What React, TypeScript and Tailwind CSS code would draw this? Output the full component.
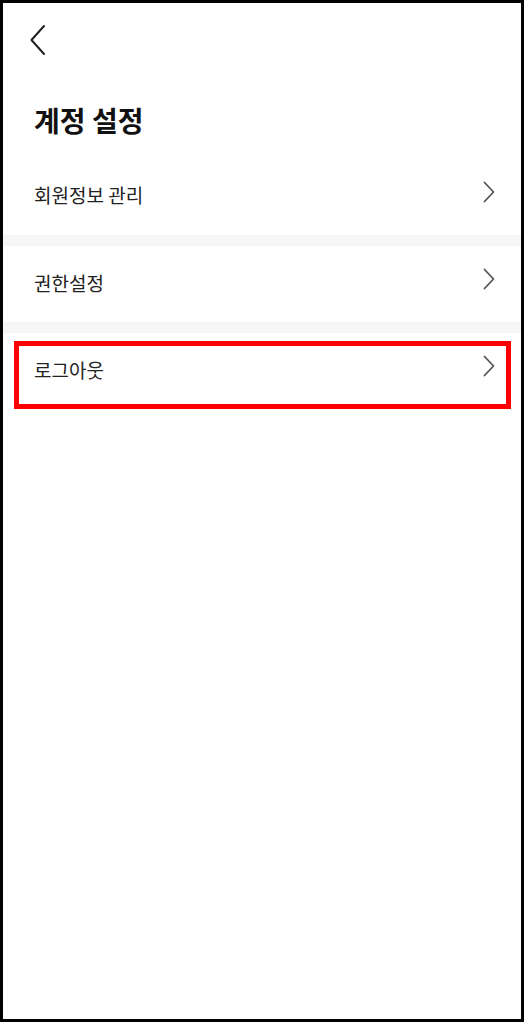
import React from "react";

const items = ["회원정보 관리", "권한설정", "로그아웃"];

function ChevronRight() {
  return (
    <svg width="12" height="22" viewBox="0 0 12 22" fill="none" className="shrink-0 mb-[10px]">
      <path
        d="M1.5 1.5 L10.5 11 L1.5 20.5"
        stroke="#555555"
        strokeWidth="1.8"
        strokeLinecap="round"
        strokeLinejoin="round"
      />
    </svg>
  );
}

export default function App() {
  return (
    <div
      className="relative w-[524px] h-[1022px] border-[3px] border-black bg-white text-[#222222] overflow-hidden"
      style={{ fontFamily: '"Noto Sans CJK KR", "Noto Sans", sans-serif' }}
    >
      {/* header — back button */}
      <div className="h-[74px] pl-[26px] pt-[21px]">
        <svg width="17" height="32" viewBox="0 0 17 32" fill="none">
          <path
            d="M15 2 L2.5 16 L15 30"
            stroke="#222222"
            strokeWidth="2"
            strokeLinecap="round"
            strokeLinejoin="round"
          />
        </svg>
      </div>

      {/* title */}
      <div className="h-[81px] pt-[5px] pl-[31px] flex items-center">
        <h1 className="text-[28px] font-bold text-[#111111] leading-none">계정 설정</h1>
      </div>

      {/* menu list */}
      <div className="flex flex-col">
        {items.map((label, i) => (
          <div key={label}>
            <div
              className={`flex items-center justify-between pl-[31px] pr-[26px] ${
                i === 0 ? "h-[77px]" : "h-[76px]"
              }`}
            >
              <span className="text-[19px] leading-none mb-[4px]">{label}</span>
              <ChevronRight />
            </div>
            {i < items.length - 1 && <div className="h-[11px] bg-[#f5f6f8]" />}
          </div>
        ))}
      </div>

      {/* red highlight around logout */}
      <div className="absolute left-[11px] top-[338px] w-[497px] h-[68px] border-[5px] border-[#ff0000]" />
    </div>
  );
}
